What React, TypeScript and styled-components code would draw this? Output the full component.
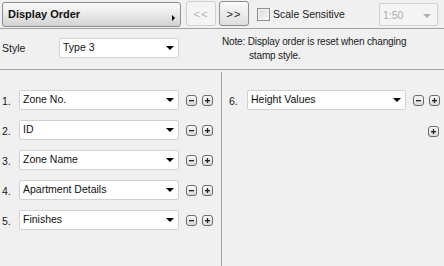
import React, { useState } from 'react'
import styled, { createGlobalStyle } from 'styled-components'

const GlobalStyle = createGlobalStyle`
  html, body {
    margin: 0;
    padding: 0;
    background: #f0f0f0;
  }
  * {
    box-sizing: border-box;
  }
`

const Panel = styled.div`
  width: 444px;
  height: 266px;
  background: #f0f0f0;
  font-family: 'Liberation Sans', Arial, sans-serif;
  font-size: 10.5px;
  color: #1a1a1a;
  display: flex;
  flex-direction: column;
  overflow: hidden;
`

const Toolbar = styled.div`
  height: 29px;
  display: flex;
  align-items: flex-start;
  padding: 1px 6px 0 2px;
  border-bottom: 1px solid #a3a3a3;
`

const TitleButton = styled.div`
  position: relative;
  width: 179px;
  height: 25px;
  margin-top: 1px;
  border: 1px solid #8c8c8c;
  border-radius: 3px;
  background: linear-gradient(#fbfbfb, #e6e6e6 55%, #d2d2d2);
  font-weight: bold;
  font-size: 11px;
  padding: 0 0 0 5px;
  line-height: 22px;
  color: #111;
`

const Corner = styled.span`
  position: absolute;
  right: 5px;
  bottom: 5px;
  width: 0;
  height: 0;
  border-top: 3px solid transparent;
  border-bottom: 3px solid transparent;
  border-left: 3px solid #000;
`

const NavButton = styled.button<{ $disabled?: boolean }>`
  width: 30px;
  height: 25px;
  margin-left: ${(p) => (p.$disabled ? '5px' : '3px')};
  border: 1px solid ${(p) => (p.$disabled ? '#cfcfcf' : '#8e8e8e')};
  border-radius: 3px;
  background: ${(p) => (p.$disabled ? '#f4f4f4' : 'linear-gradient(#fafafa, #dedede)')};
  color: ${(p) => (p.$disabled ? '#b5b5b5' : '#222')};
  font-family: 'Liberation Sans', Arial, sans-serif;
  font-size: 11px;
  padding: 0;
  letter-spacing: 1px;
`

const CheckLabel = styled.label`
  display: flex;
  align-items: center;
  gap: 3px;
  margin-left: 8px;
  height: 26px;
`

const CheckBox = styled.span<{ $checked: boolean }>`
  width: 13px;
  height: 13px;
  border: 1px solid #8e8e8e;
  background: linear-gradient(135deg, #dcdcdc, #f6f6f6);
  box-shadow: inset 0 0 0 1px #f4f4f4;
  display: flex;
  align-items: center;
  justify-content: center;
  font-size: 9px;
`

const ScaleSelect = styled.div`
  margin-left: auto;
  margin-top: 2px;
  width: 59px;
  height: 23px;
  border: 1px solid #cfcfcf;
  border-radius: 2px;
  background: #f4f4f4;
  color: #ababab;
  display: flex;
  align-items: center;
  padding-left: 3px;
  position: relative;
`

const GreyArrow = styled.span`
  position: absolute;
  right: 6px;
  top: 10px;
  border-left: 4px solid transparent;
  border-right: 4px solid transparent;
  border-top: 4px solid #b0b0b0;
`

const StyleBar = styled.div`
  height: 41px;
  display: flex;
  align-items: flex-start;
  padding: 9px 0 0 2px;
  border-bottom: 1px solid #a3a3a3;
`

const FieldLabel = styled.span`
  width: 57px;
  line-height: 20px;
`

const Note = styled.div`
  margin-left: 43px;
  margin-top: -3px;
  font-size: 10px;
  letter-spacing: -0.15px;
  line-height: 14px;
  color: #1a1a1a;
`

const NoteIndent = styled.div`
  padding-left: 27px;
`

const Body = styled.div`
  flex: 1;
  display: grid;
  grid-template-columns: 221px 1px 1fr;
`

const Divider = styled.div`
  background: #a3a3a3;
  margin-top: 2px;
`

const Column = styled.div<{ $pad: number }>`
  display: flex;
  flex-direction: column;
  gap: 10px;
  padding: 20px 0 0 ${(p) => p.$pad}px;
`

const Row = styled.div`
  display: flex;
  align-items: center;
  height: 20px;
`

const Num = styled.span<{ $w: number }>`
  width: ${(p) => p.$w}px;
  padding-top: 2px;
`

const Select = styled.div<{ $w: number }>`
  position: relative;
  width: ${(p) => p.$w}px;
  height: 20px;
  background: #fff;
  border: 1px solid #d2d2d2;
  border-radius: 2px;
  padding-left: 3px;
  line-height: 17px;
  color: #111;
`

const Arrow = styled.span`
  position: absolute;
  right: 4px;
  top: 7px;
  border-left: 4px solid transparent;
  border-right: 4px solid transparent;
  border-top: 4px solid #000;
`

const Tiny = styled.button<{ $gap: number }>`
  width: 11px;
  height: 11px;
  margin-left: ${(p) => p.$gap}px;
  padding: 0;
  border: 1px solid #6b6b6b;
  border-radius: 3px;
  background: linear-gradient(#fafafa, #d8d8d8);
  display: flex;
  align-items: center;
  justify-content: center;
`

const LoneRow = styled.div`
  display: flex;
  justify-content: flex-end;
  padding-right: 5px;
  margin-top: 6px;
`

const Sign = ({ plus }: { plus?: boolean }) => (
  <svg width="7" height="7" viewBox="0 0 7 7">
    <rect x="1" y="3" width="5" height="1.3" fill="#222" />
    {plus && <rect x="2.85" y="1" width="1.3" height="5" fill="#222" />}
  </svg>
)

const Dropdown = ({ w, value }: { w: number; value: string }) => (
  <Select $w={w}>
    {value}
    <Arrow />
  </Select>
)

const leftItems = ['Zone No.', 'ID', 'Zone Name', 'Apartment Details', 'Finishes']

const App = () => {
  const [scale, setScale] = useState(false)

  return (
    <Panel>
      <GlobalStyle />
      <Toolbar>
        <TitleButton>
          Display Order
          <Corner />
        </TitleButton>
        <NavButton $disabled>&lt;&lt;</NavButton>
        <NavButton>&gt;&gt;</NavButton>
        <CheckLabel onClick={() => setScale(!scale)}>
          <CheckBox $checked={scale}>{scale ? '✓' : ''}</CheckBox>
          Scale Sensitive
        </CheckLabel>
        <ScaleSelect>
          1:50
          <GreyArrow />
        </ScaleSelect>
      </Toolbar>
      <StyleBar>
        <FieldLabel>Style</FieldLabel>
        <Dropdown w={120} value="Type 3" />
        <Note>
          Note: Display order is reset when changing
          <NoteIndent>stamp style.</NoteIndent>
        </Note>
      </StyleBar>
      <Body>
        <Column $pad={2}>
          {leftItems.map((item, i) => (
            <Row key={item}>
              <Num $w={17}>{i + 1}.</Num>
              <Dropdown w={160} value={item} />
              <Tiny $gap={7}>
                <Sign />
              </Tiny>
              <Tiny $gap={5}>
                <Sign plus />
              </Tiny>
            </Row>
          ))}
        </Column>
        <Divider />
        <Column $pad={7}>
          <Row>
            <Num $w={18}>6.</Num>
            <Dropdown w={159} value="Height Values" />
            <Tiny $gap={7}>
              <Sign />
            </Tiny>
            <Tiny $gap={5}>
              <Sign plus />
            </Tiny>
          </Row>
          <LoneRow>
            <Tiny $gap={0}>
              <Sign plus />
            </Tiny>
          </LoneRow>
        </Column>
      </Body>
    </Panel>
  )
}

export default App
